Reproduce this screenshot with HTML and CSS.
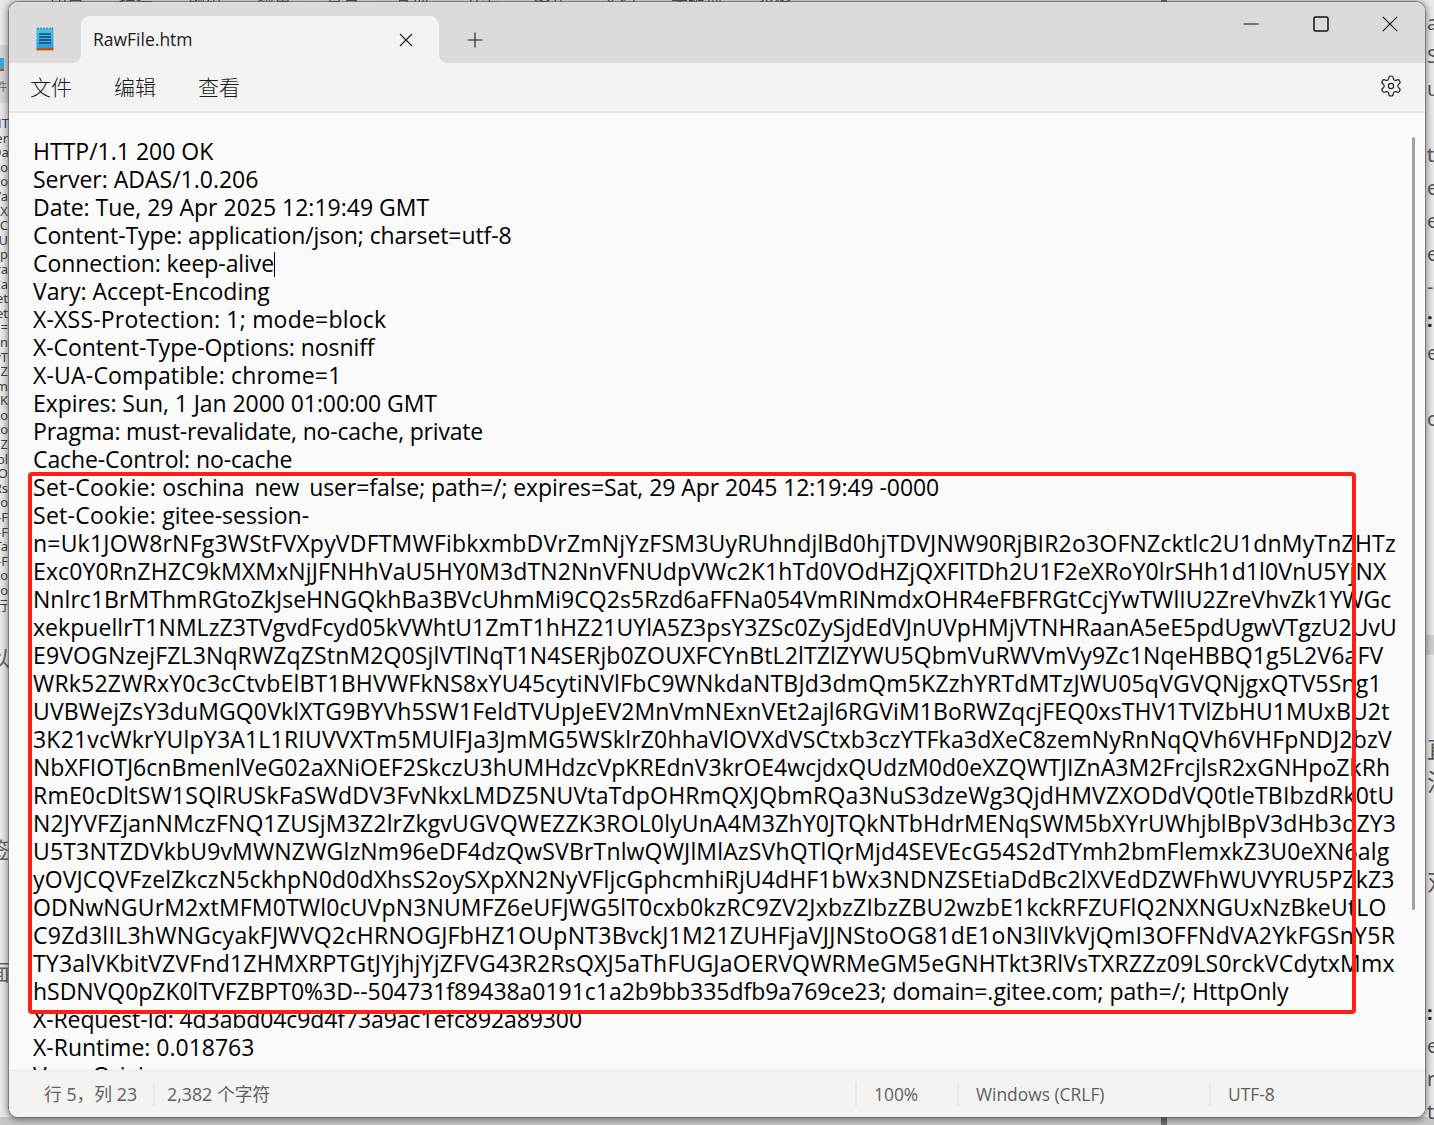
FILE: index.html
```html
<!DOCTYPE html>
<html lang="zh">
<head>
<meta charset="utf-8">
<title>RawFile.htm</title>
<link rel="stylesheet" href="styles.css">
</head>
<body>
<div class="desktop">
  <div class="band-left"><span class="band-icon"></span><span class="band-text">件</span></div>
  <div class="band-right"></div>
  <div class="band-bottom"></div>
  <div class="post post-top"></div>
  <div class="post post-bottom"></div>
  <div class="peek-top">
    <span>印章</span><span>拍摄</span><span>编组</span><span>颜色</span><span>背景</span><span>其他</span><span>分类</span><span>格式</span><span>文档</span><span>关键词</span><span>表格</span>
  </div>
  <div class="peek-left">
    <div>HT</div><div>er</div><div>Da</div><div>Co</div><div>Co</div><div>Va</div><div>-X</div><div>-C</div><div>-U</div><div>xp</div><div>ra</div><div>Ca</div><div>et</div><div>et</div><div>n=</div><div>In</div><div>yT</div><div>Z</div><div>m</div><div>3K</div><div>zo</div><div>Xo</div><div>lZ</div><div>bl</div><div>O</div><div>Rs</div><div>o</div><div>-F</div><div>-F</div><div>Ta</div><div>-F</div><div>o</div><div>o</div><div>行</div>
  </div>
  <div class="peek-right">
    <div>a</div><div>S</div><div>u</div><div></div><div>t</div><div>e</div><div>e</div><div>e</div><div>-</div><div class="bold">:</div><div>e</div><div></div><div>o</div><div></div><div></div><div></div><div></div><div></div><div></div><div></div><div></div><div></div><div class="big">直</div><div class="big">注</div><div></div><div></div><div class="big">对</div><div></div><div></div><div></div><div class="bold">:</div><div>e</div><div>r</div><div>t</div>
  </div>
  <div class="peek-big">
    <div>以</div><div>签</div><div>面</div>
  </div>

  <main class="window">
    <header class="titlebar">
      <svg class="app-icon" viewBox="0 0 18 24" aria-hidden="true">
        <defs><linearGradient id="pad" x1="0" y1="0" x2="0" y2="1"><stop offset="0" stop-color="#4cc3ea"/><stop offset="1" stop-color="#2b9bd8"/></linearGradient></defs>
        <rect x="0.5" y="1.5" width="17" height="20" rx="1" fill="url(#pad)"/>
        <path d="M2 0.5v2M5 0.5v2M8 0.5v2M11 0.5v2M14 0.5v2M16.5 0.5v2" stroke="#1d6f9e" stroke-width="1.2"/>
        <path d="M3 7h12M3 10h12M3 13h12M3 16h12" stroke="#17496b" stroke-width="1.3"/>
        <rect x="0.5" y="21" width="17" height="2.4" fill="#b8570f"/>
      </svg>
      <div class="tab">
        <span class="tab-title">RawFile.htm</span>
        <svg class="ico tab-close" viewBox="0 0 14 14" aria-hidden="true"><path d="M1 1l12 12M13 1L1 13"/></svg>
      </div>
      <svg class="ico tab-new" viewBox="0 0 16 16" aria-hidden="true"><path d="M8 .5v15M.5 8h15"/></svg>
      <div class="controls">
        <svg class="ico ctl" viewBox="0 0 16 16" aria-hidden="true"><path d="M.5 8h15"/></svg>
        <svg class="ico ctl ctl-max" viewBox="0 0 16 16" aria-hidden="true"><rect x="1" y="1" width="14" height="14" rx="1.6"/></svg>
        <svg class="ico ctl" viewBox="0 0 16 16" aria-hidden="true"><path d="M.8.8l14.4 14.4M15.2.8L.8 15.2"/></svg>
      </div>
    </header>
    <nav class="menubar">
      <span>文件</span><span>编辑</span><span>查看</span>
      <svg class="gear" viewBox="0 0 24 24" aria-hidden="true"><path d="M12.22 2h-.44a2 2 0 0 0-2 2v.18a2 2 0 0 1-1 1.73l-.43.25a2 2 0 0 1-2 0l-.15-.08a2 2 0 0 0-2.73.73l-.22.38a2 2 0 0 0 .73 2.73l.15.1a2 2 0 0 1 1 1.72v.51a2 2 0 0 1-1 1.74l-.15.09a2 2 0 0 0-.73 2.73l.22.38a2 2 0 0 0 2.73.73l.15-.08a2 2 0 0 1 2 0l.43.25a2 2 0 0 1 1 1.73V20a2 2 0 0 0 2 2h.44a2 2 0 0 0 2-2v-.18a2 2 0 0 1 1-1.73l.43-.25a2 2 0 0 1 2 0l.15.08a2 2 0 0 0 2.73-.73l.22-.39a2 2 0 0 0-.73-2.73l-.15-.08a2 2 0 0 1-1-1.74v-.5a2 2 0 0 1 1-1.74l.15-.09a2 2 0 0 0 .73-2.73l-.22-.38a2 2 0 0 0-2.73-.73l-.15.08a2 2 0 0 1-2 0l-.43-.25a2 2 0 0 1-1-1.73V4a2 2 0 0 0-2-2z"/><circle cx="12" cy="12" r="2.6"/></svg>
    </nav>
    <section class="editor">
<pre class="doc">HTTP/1.1 200 OK
Server: ADAS/1.0.206
Date: Tue, 29 Apr 2025 12:19:49 GMT
<span class="m1">Content-Type: application/json; charset=utf-8</span>
<span class="m07">Connection: keep-alive</span><span class="caret"></span>
Vary: Accept-Encoding
<span class="b20">X-XSS-Protection: 1; mode=block</span>
<span class="m07">X-Content-Type-Options: nosniff</span>
<span class="b20">X-UA-Compatible: chrome=1</span>
<span class="m07">Expires: Sun, 1 Jan 2000 01:00:00 GMT</span>
<span class="m2">Pragma: must-revalidate, no-cache, private</span>
<span class="m1">Cache-Control: no-cache</span>
<span class="b27">Set-Cookie: </span><span class="m07">oschina<span class="clipped">_</span>new<span class="clipped">_</span>user=false; path=/; expires=Sat, 29 Apr 2045 12:19:49 -0000</span>
<span class="b27">Set-Cookie: </span>gitee-session-
<span class="b20">n=Uk1JOW8rNFg3WStFVXpyVDFTMWFibkxmbDVrZmNjYzFSM3UyRUhndjlBd0hjTDVJNW90RjBIR2o3OFNZcktlc2U1dnMyTnZHTz</span>
<span class="b13">Exc0Y0RnZHZC9kMXMxNjJFNHhVaU5HY0M3dTN2NnVFNUdpVWc2K1hTd0VOdHZjQXFITDh2U1F2eXRoY0lrSHh1d1l0VnU5YjNX</span>
<span class="b05">Nnlrc1BrMThmRGtoZkJseHNGQkhBa3BVcUhmMi9CQ2s5Rzd6aFFNa054VmRINmdxOHR4eFBFRGtCcjYwTWlIU2ZreVhvZk1YWGc</span>
<span class="b05">xekpuellrT1NMLzZ3TVgvdFcyd05kVWhtU1ZmT1hHZ21UYlA5Z3psY3ZSc0ZySjdEdVJnUVpHMjVTNHRaanA5eE5pdUgwVTgzU2UvU</span>
<span class="b13">E9VOGNzejFZL3NqRWZqZStnM2Q0SjlVTlNqT1N4SERjb0ZOUXFCYnBtL2lTZlZYWU5QbmVuRWVmVy9Zc1NqeHBBQ1g5L2V6aFV</span>
<span class="b20">WRk52ZWRxY0c3cCtvbElBT1BHVWFkNS8xYU45cytiNVlFbC9WNkdaNTBJd3dmQm5KZzhYRTdMTzJWU05qVGVQNjgxQTV5Sng1</span>
<span class="b13">UVBWejZsY3duMGQ0VklXTG9BYVh5SW1FeldTVUpJeEV2MnVmNExnVEt2ajl6RGViM1BoRWZqcjFEQ0xsTHV1TVlZbHU1MUxBU2t</span>
<span class="b20">3K21vcWkrYUlpY3A1L1RIUVVXTm5MUlFJa3JmMG5WSklrZ0hhaVlOVXdVSCtxb3czYTFka3dXeC8zemNyRnNqQVh6VHFpNDJ2bzV</span>
<span class="b05">NbXFIOTJ6cnBmenlVeG02aXNiOEF2SkczU3hUMHdzcVpKREdnV3krOE4wcjdxQUdzM0d0eXZQWTJIZnA3M2FrcjlsR2xGNHpoZkRh</span>
<span class="b20">RmE0cDltSW1SQlRUSkFaSWdDV3FvNkxLMDZ5NUVtaTdpOHRmQXJQbmRQa3NuS3dzeWg3QjdHMVZXODdVQ0tleTBIbzdRk0tU</span>
<span class="b16">N2JYVFZjanNMczFNQ1ZUSjM3Z2lrZkgvUGVQWEZZK3ROL0lyUnA4M3ZhY0JTQkNTbHdrMENqSWM5bXYrUWhjblBpV3dHb3dZY3</span>
<span class="b16">U5T3NTZDVkbU9vMWNZWGlzNm96eDF4dzQwSVBrTnlwQWJlMlAzSVhQTlQrMjd4SEVEcG54S2dTYmh2bmFlemxkZ3U0eXN6alg</span>
<span class="b13">yOVJCQVFzelZkczN5ckhpN0d0dXhsS2oySXpXN2NyVFljcGphcmhiRjU4dHF1bWx3NDNZSEtiaDdBc2lXVEdDZWFhWUVYRU5PZkZ3</span>
<span class="b16">ODNwNGUrM2xtMFM0TWl0cUVpN3NUMFZ6eUFJWG5lT0cxb0kzRC9ZV2JxbzZIbzZBU2wzbE1kckRFZUFlQ2NXNGUxNzBkeUtLO</span>
<span class="b27">C9Zd3lIL3hWNGcyakFJWVQ2cHRNOGJFbHZ1OUpNT3BvckJ1M21ZUHFjaVJJNStoOG81dE1oN3lIVkVjQmI3OFFNdVA2YkFGSnY5R</span>
<span class="b20">TY3alVKbitVZVFnd1ZHMXRPTGtJYjhjYjZFVG43R2RsQXJ5aThFUGJaOERVQWRMeGM5eGNHTkt3RlVsTXRZZz09LS0rckVCdytxMmx</span>
<span class="m03">hSDNVQ0pZK0lTVFZBPT0%3D--504731f89438a0191c1a2b9bb335dfb9a769ce23; domain=.gitee.com; path=/; HttpOnly</span>
<span class="m1">X-Request-Id: 4d3abd04c9d4f73a9ac1efc892a89300</span>
X-Runtime: 0.018763
Vary: Origin</pre>
      <div class="highlight"></div>
      <div class="scrollbar"></div>
    </section>
    <footer class="statusbar">
      <div class="cell cell-pos">行 5，列 23</div>
      <div class="cell cell-count">2,382 个字符</div>
      <div class="cell">100%</div>
      <div class="cell">Windows (CRLF)</div>
      <div class="cell">UTF-8</div>
    </footer>
  </main>
</div>
</body>
</html>
```
FILE: styles.css
```css
* { box-sizing: border-box; }
html, body { margin: 0; height: 100%; }
body { overflow: hidden; font-family: "Open Sans", "Noto Sans CJK SC", sans-serif; color: #000; }

.desktop { position: relative; width: 1434px; height: 1125px; overflow: hidden; background: #e9e9e9; }

.band-left { position: absolute; left: 0; top: 45px; width: 9px; height: 58px; background: #d6d6d6; }
.band-icon { position: absolute; left: 0; top: 13px; width: 4px; height: 13px; background: #3aa9dc; border-bottom: 2px solid #b8570f; }
.band-text { position: absolute; left: -4px; top: 36px; font: 11px/1 "Noto Sans CJK SC", sans-serif; color: #666; }
.band-right { position: absolute; left: 1426px; top: 635px; width: 8px; height: 20px; background: #cfcfcf; }
.band-bottom { position: absolute; left: 0; right: 0; top: 1117px; height: 8px; background: #c6c6c6; }
.post { position: absolute; left: 1161px; width: 6px; background: #6e6e6e; }
.post-top { top: 0; height: 3px; }
.post-bottom { top: 1117px; height: 8px; }

.peek-top { position: absolute; top: -14px; left: 50px; display: flex; gap: 35px; font: 17px "Noto Sans CJK SC", sans-serif; color: #555; filter: blur(.4px); }
.peek-left { position: absolute; top: 116px; left: -8px; width: 30px; font: 13px/14.6px "Noto Sans", "Noto Sans CJK SC", sans-serif; color: #444; text-align: right; white-space: nowrap; }
.peek-left div { height: 14.6px; padding-right: 14px; }
.peek-right { position: absolute; top: 6px; left: 1427px; font: 20px/33px "Noto Sans", "Noto Sans CJK SC", sans-serif; color: #555; }
.peek-right div { height: 33px; }
.peek-right .bold { font-weight: 700; color: #222; }
.peek-right .big { font-size: 24px; }
.peek-big { position: absolute; left: -12px; top: 645px; display: flex; flex-direction: column; gap: 170px; font: 22px/1 "Noto Sans CJK SC", sans-serif; color: #666; }
.peek-big div:last-child { margin-top: -70px; }

.window { position: absolute; left: 9px; top: 2px; width: 1416px; height: 1115px; display: flex; flex-direction: column; border-radius: 9px; overflow: hidden; background: #fafafa; box-shadow: 0 0 0 1px rgba(90,90,90,.55), 0 1px 6px 2px rgba(0,0,0,.42); }

.titlebar { position: relative; flex: 0 0 61px; display: flex; align-items: flex-start; background: linear-gradient(90deg, #dcdada, #d9dadc); }
.app-icon { flex: none; width: 18px; height: 24px; margin: 25px 0 0 27px; }
.tab { position: relative; flex: none; width: 358px; height: 47px; margin: 14px 0 0 27px; padding: 0 26px 2px 12px; display: flex; align-items: center; justify-content: space-between; background: #f3f3f3; border-radius: 9px 9px 0 0; }
.tab::before, .tab::after { content: ""; position: absolute; bottom: 0; width: 8px; height: 8px; }
.tab::before { left: -8px; background: radial-gradient(circle at 0 0, transparent 7.5px, #f3f3f3 8px); }
.tab::after { right: -8px; background: radial-gradient(circle at 100% 0, transparent 7.5px, #f3f3f3 8px); }
.tab-title { font-size: 17.5px; font-weight: 500; color: #1a1a1a; }
.tab-close { width: 14px; height: 14px; margin-top: 2px; }
.ico { fill: none; stroke: #1e1e1e; stroke-width: 1.15; }
.tab-new { flex: none; width: 16px; height: 16px; margin: 30px 0 0 28px; }
.controls { margin-left: auto; display: flex; gap: 53.5px; padding: 14px 27px 0 0; }
.ctl { width: 16px; height: 16px; stroke: #111; }
.ctl-max { stroke-width: 1.5; }

.menubar { flex: 0 0 50px; display: flex; align-items: center; gap: 42px; padding: 0 22px 2px 21px; background: #f3f3f3; border-bottom: 2px solid #e8e8e8; font: 300 21px "Noto Sans CJK SC", sans-serif; color: #1a1a1a; }
.gear { margin-left: auto; width: 24px; height: 24px; fill: none; stroke: #222; stroke-width: 1.2; }

.editor { position: relative; flex: 1 1 0; min-height: 0; overflow: hidden; background: #fafafa; }
.doc { margin: 0; padding: 24px 0 0 24px; font: 23px/28px "Open Sans", sans-serif; color: #000; white-space: pre; }
.m2 { letter-spacing: -.2px; }
.m1 { letter-spacing: -.1px; }
.m07 { letter-spacing: -.07px; }
.m03 { letter-spacing: -.03px; }
.b05 { letter-spacing: .05px; }
.b13 { letter-spacing: .13px; }
.b16 { letter-spacing: .16px; }
.b20 { letter-spacing: .2px; }
.b27 { letter-spacing: .27px; }
.clipped { color: transparent; }
.caret { display: inline-block; width: 1px; height: 25px; margin-right: -1px; background: #000; vertical-align: -5px; }
.highlight { position: absolute; left: 19px; top: 359px; width: 1328px; height: 542px; border: 4px solid #fe2015; border-radius: 4px; }
.scrollbar { position: absolute; left: 1403px; top: 24px; width: 3px; height: 773px; border-radius: 2px; background: #a2a2a2; }

.statusbar { flex: 0 0 47px; display: grid; grid-template-columns: 144px 702px 102px 252px 1fr; align-items: center; background: #f3f3f2; border-top: 1px solid #e6e6e6; font-size: 17.4px; color: #5f5f5f; }
.cell { height: 24px; line-height: 24px; padding-left: 17px; border-left: 2px solid #e8e8e8; white-space: nowrap; font-family: "Open Sans", "Noto Sans CJK SC", sans-serif; }
.cell-pos { padding-left: 35px; border-left: 0; font-size: 17.8px; }
.cell-count { padding-left: 12px; font-size: 17.8px; }
```
